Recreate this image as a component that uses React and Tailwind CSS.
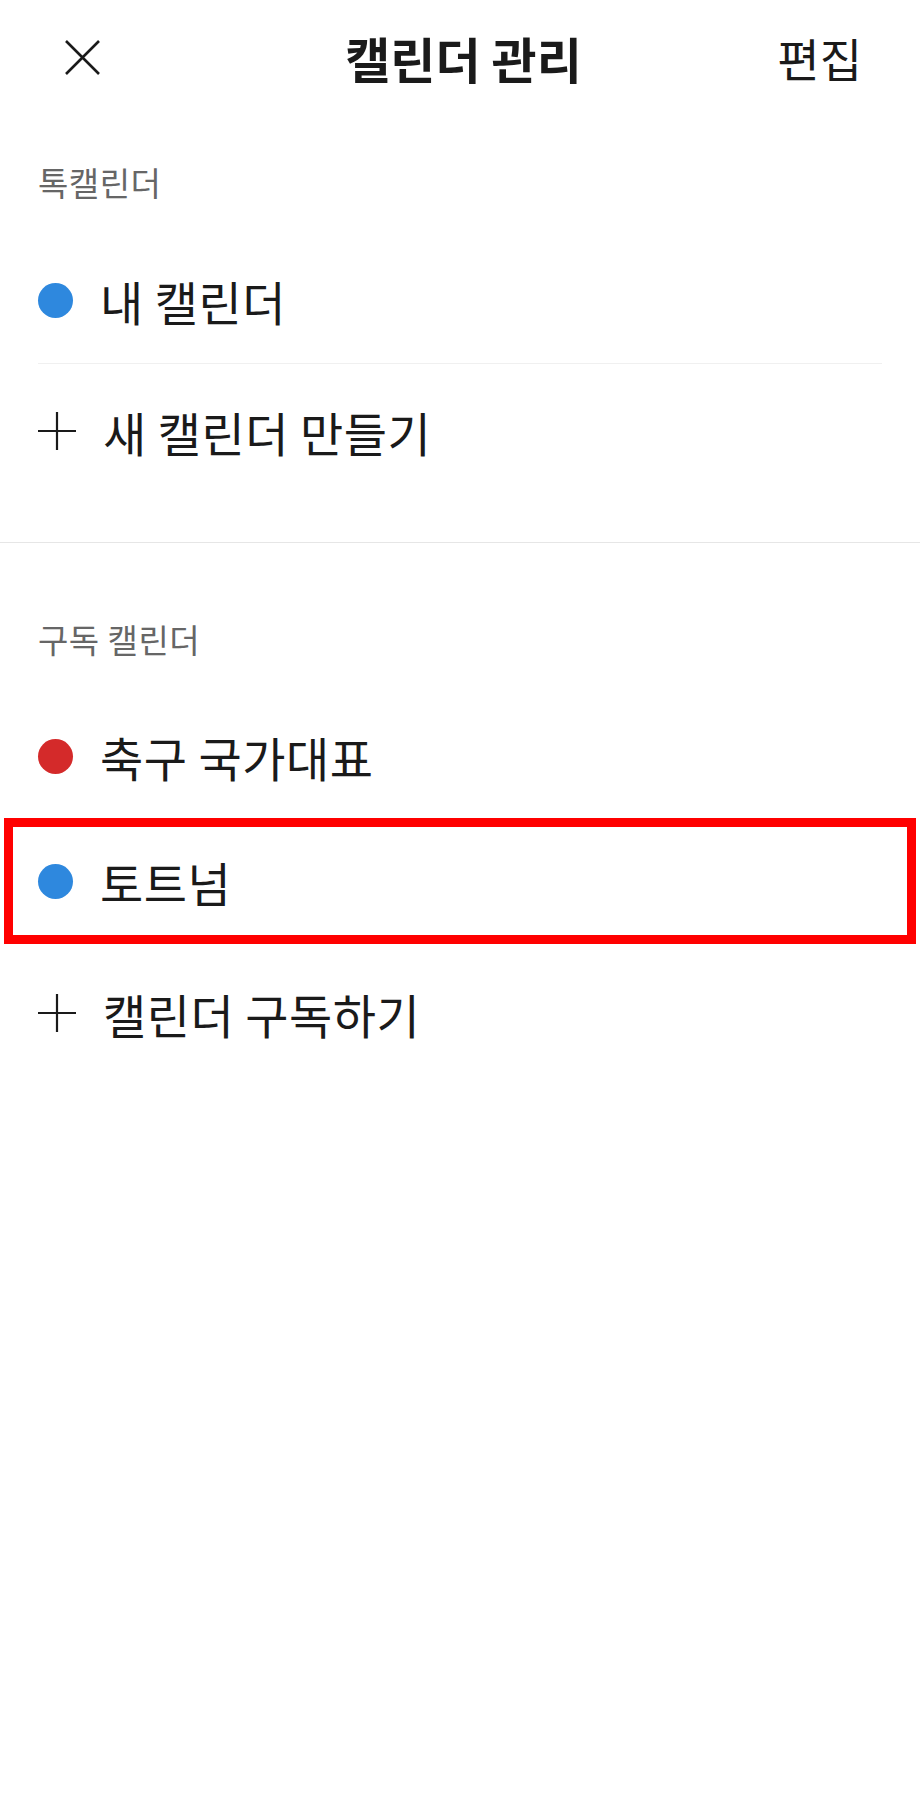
const font = {
  fontFamily: '"Noto Sans CJK KR", "Noto Sans", sans-serif',
};

const Dot = ({ color }) => (
  <span className={`block w-[35px] h-[35px] rounded-full shrink-0 ${color}`} />
);

const Plus = () => (
  <svg width="38" height="38" viewBox="0 0 38 38" className="shrink-0">
    <path d="M19 0V38M0 19H38" stroke="#1a1a1a" strokeWidth="2.2" />
  </svg>
);

const Row = ({ icon, label, h }) => (
  <div className={`flex items-center px-[38px] ${h}`}>
    {icon}
    <span className="ml-[27px] text-[47px] tracking-[0.5px] text-[#1a1a1a] leading-none">
      {label}
    </span>
  </div>
);

export default function App() {
  return (
    <div className="w-[920px] min-h-[1805px] bg-white" style={font}>
      <header className="h-[114px] grid grid-cols-[1fr_auto_1fr] items-center pl-[65px] pr-[58px]">
        <button className="justify-self-start">
          <svg width="35" height="35" viewBox="0 0 35 35">
            <path d="M1 1L34 34M34 1L1 34" stroke="#1a1a1a" strokeWidth="2.6" />
          </svg>
        </button>
        <h1 className="text-[49px] font-bold text-[#1a1a1a] leading-none">
          캘린더 관리
        </h1>
        <button className="justify-self-end text-[46px] text-[#1a1a1a] leading-none">
          편집
        </button>
      </header>

      <section>
        <div className="h-[123px] pt-[14px] flex items-center px-[38px]">
          <span className="text-[33px] tracking-[0.5px] text-[#666666] leading-none">
            톡캘린더
          </span>
        </div>
        <Row h="h-[126px]" icon={<Dot color="bg-[#2e88de]" />} label="내 캘린더" />
        <div className="mx-[38px] h-px bg-[#f0f0f0]" />
        <Row h="h-[134px]" icon={<Plus />} label="새 캘린더 만들기" />
      </section>

      <div className="mt-[44px] h-px bg-[#e6e6e6]" />

      <section>
        <div className="h-[152px] pt-[40px] flex items-center px-[38px]">
          <span className="text-[33px] tracking-[0.5px] text-[#666666] leading-none">
            구독 캘린더
          </span>
        </div>
        <Row h="h-[123px]" icon={<Dot color="bg-[#d42a2a]" />} label="축구 국가대표" />
        <div className="mx-[4px] h-[126px] border-[9px] border-[#ff0000] flex items-center pl-[25px]">
          <Dot color="bg-[#2e88de]" />
          <span className="ml-[27px] text-[47px] tracking-[0.5px] text-[#1a1a1a] leading-none">
            토트넘
          </span>
        </div>
        <Row h="h-[138px]" icon={<Plus />} label="캘린더 구독하기" />
      </section>
    </div>
  );
}
